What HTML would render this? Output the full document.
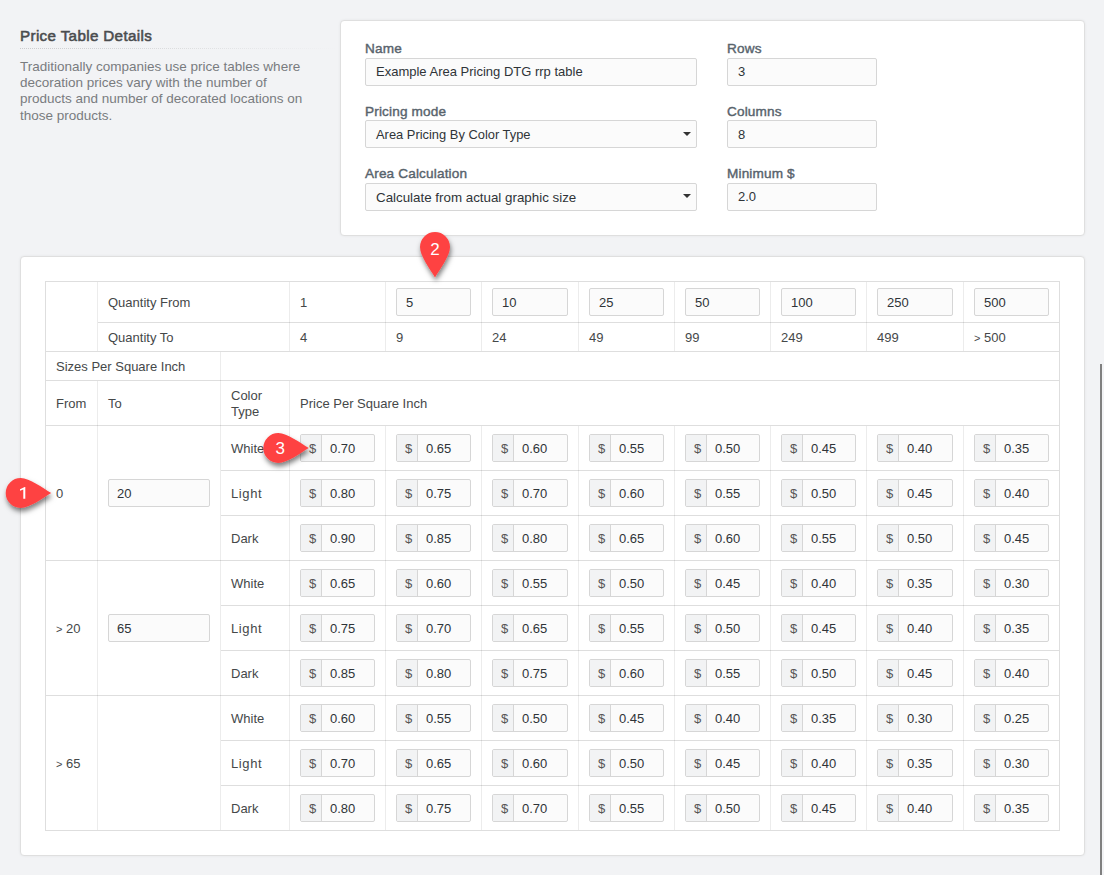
<!DOCTYPE html><html><head><meta charset="utf-8"><style>
*{margin:0;padding:0;box-sizing:border-box}
html,body{width:1104px;height:875px;overflow:hidden;background:#f2f3f5;font-family:"Liberation Sans",sans-serif;position:relative}
.a{position:absolute}
.panel{position:absolute;background:#fff;border:1px solid #dfdfdf;border-radius:4px;box-shadow:0 0 3px rgba(0,0,0,0.06)}
.t{position:absolute;white-space:nowrap;font-size:13px;color:#454849;line-height:16px}
.lbl{position:absolute;white-space:nowrap;font-size:13.6px;font-weight:normal;letter-spacing:0.15px;-webkit-text-stroke:0.4px #58636c;color:#58636c;line-height:16px}
.inp{position:absolute;background:#fbfbfb;border:1px solid #d6d6d6;border-radius:2px}
.inp span{position:absolute;white-space:nowrap;font-size:13px;color:#2f3438;line-height:16px}
.hl{position:absolute;height:1px;background:#dedede}
.vl{position:absolute;width:1px;background:#dedede}
.vi{position:absolute;width:1px;background:rgba(0,0,0,0.075)}
.hi{position:absolute;height:1px;background:rgba(0,0,0,0.13)}
.grp{position:absolute;background:#fbfbfb;border:1px solid #d6d6d6;border-radius:2px;overflow:hidden}
.grp .ad{position:absolute;left:0;top:0;bottom:0;width:21px;background:#f2f3f4;border-right:1px solid #d6d6d6}
.grp .ad span{position:absolute;left:8px;top:6px;font-size:13px;color:#555;line-height:16px}
.grp .v{position:absolute;left:29px;top:6px;font-size:13px;color:#2f3438;line-height:16px}
.caret{position:absolute;width:0;height:0;border-left:4px solid transparent;border-right:4px solid transparent;border-top:4px solid #333}
.sb{position:absolute;left:1100px;top:364px;width:2px;height:511px;background:#808080}
</style></head><body>
<div class="a" style="left:20px;top:27px;font-size:15.2px;font-weight:normal;letter-spacing:0.35px;-webkit-text-stroke:0.55px #4a4c4e;color:#4a4c4e;line-height:18px;white-space:nowrap">Price Table Details</div>
<div class="a" style="left:20px;top:48px;width:320px;height:1px;background:repeating-linear-gradient(90deg,rgba(0,0,0,0.16) 0 1px,transparent 1px 2px);-webkit-mask-image:linear-gradient(90deg,#000 0%,rgba(0,0,0,0.55) 50%,transparent 100%)"></div>
<div class="a" style="left:20px;top:59px;font-size:13.5px;color:#797c7f;line-height:16.2px;white-space:nowrap">Traditionally companies use price tables where<br>decoration prices vary with the number of<br>products and number of decorated locations on<br>those products.</div>
<div class="panel" style="left:340px;top:20px;width:745px;height:216px"></div>
<div class="lbl" style="left:365px;top:41px">Name</div>
<div class="inp" style="left:365px;top:58px;width:332px;height:28px"><span style="left:10px;top:5px;font-size:13px">Example Area Pricing DTG rrp table</span></div>
<div class="lbl" style="left:365px;top:104px">Pricing mode</div>
<div class="inp" style="left:365px;top:120px;width:332px;height:28px"><span style="left:10px;top:6px;font-size:12.9px">Area Pricing By Color Type</span><div class="caret" style="left:317px;top:11px"></div></div>
<div class="lbl" style="left:365px;top:166px">Area Calculation</div>
<div class="inp" style="left:365px;top:183px;width:332px;height:28px"><span style="left:10px;top:6px;font-size:13.35px">Calculate from actual graphic size</span><div class="caret" style="left:317px;top:10px"></div></div>
<div class="lbl" style="left:727px;top:41px">Rows</div>
<div class="inp" style="left:727px;top:58px;width:150px;height:28px"><span style="left:10px;top:5px;font-size:13px">3</span></div>
<div class="lbl" style="left:727px;top:104px">Columns</div>
<div class="inp" style="left:727px;top:120px;width:150px;height:28px"><span style="left:10px;top:6px;font-size:13px">8</span></div>
<div class="lbl" style="left:727px;top:166px">Minimum $</div>
<div class="inp" style="left:727px;top:183px;width:150px;height:28px"><span style="left:10px;top:5px;font-size:13px">2.0</span></div>
<div class="panel" style="left:20px;top:256px;width:1065px;height:600px"></div>
<div class="hl" style="left:45px;top:281px;width:1015px"></div>
<div class="hl" style="left:45px;top:830px;width:1015px"></div>
<div class="vl" style="left:45px;top:281px;height:550px"></div>
<div class="vl" style="left:1059px;top:281px;height:550px"></div>
<div class="hi" style="left:98px;top:322px;width:961px"></div>
<div class="hi" style="left:46px;top:351px;width:1013px"></div>
<div class="hi" style="left:46px;top:380px;width:1013px"></div>
<div class="hi" style="left:46px;top:425px;width:1013px"></div>
<div class="hi" style="left:221px;top:470px;width:838px"></div>
<div class="hi" style="left:221px;top:515px;width:838px"></div>
<div class="hi" style="left:221px;top:605px;width:838px"></div>
<div class="hi" style="left:221px;top:650px;width:838px"></div>
<div class="hi" style="left:221px;top:740px;width:838px"></div>
<div class="hi" style="left:221px;top:785px;width:838px"></div>
<div class="hi" style="left:46px;top:560px;width:1013px"></div>
<div class="hi" style="left:46px;top:695px;width:1013px"></div>
<div class="vi" style="left:97px;top:282px;height:69px"></div>
<div class="vi" style="left:97px;top:381px;height:449px"></div>
<div class="vi" style="left:220px;top:352px;height:478px"></div>
<div class="vi" style="left:289px;top:282px;height:69px"></div>
<div class="vi" style="left:289px;top:381px;height:449px"></div>
<div class="vi" style="left:385px;top:282px;height:69px"></div>
<div class="vi" style="left:385px;top:426px;height:404px"></div>
<div class="vi" style="left:481px;top:282px;height:69px"></div>
<div class="vi" style="left:481px;top:426px;height:404px"></div>
<div class="vi" style="left:578px;top:282px;height:69px"></div>
<div class="vi" style="left:578px;top:426px;height:404px"></div>
<div class="vi" style="left:674px;top:282px;height:69px"></div>
<div class="vi" style="left:674px;top:426px;height:404px"></div>
<div class="vi" style="left:770px;top:282px;height:69px"></div>
<div class="vi" style="left:770px;top:426px;height:404px"></div>
<div class="vi" style="left:866px;top:282px;height:69px"></div>
<div class="vi" style="left:866px;top:426px;height:404px"></div>
<div class="vi" style="left:963px;top:282px;height:69px"></div>
<div class="vi" style="left:963px;top:426px;height:404px"></div>
<div class="t" style="left:108px;top:295px;">Quantity From</div>
<div class="t" style="left:108px;top:330px;">Quantity To</div>
<div class="t" style="left:300px;top:295px;">1</div>
<div class="t" style="left:300px;top:330px;">4</div>
<div class="inp" style="left:396px;top:288px;width:75px;height:28px"><span style="left:9px;top:6px;font-size:13px">5</span></div>
<div class="t" style="left:396px;top:330px;">9</div>
<div class="inp" style="left:492px;top:288px;width:76px;height:28px"><span style="left:9px;top:6px;font-size:13px">10</span></div>
<div class="t" style="left:492px;top:330px;">24</div>
<div class="inp" style="left:589px;top:288px;width:75px;height:28px"><span style="left:9px;top:6px;font-size:13px">25</span></div>
<div class="t" style="left:589px;top:330px;">49</div>
<div class="inp" style="left:685px;top:288px;width:75px;height:28px"><span style="left:9px;top:6px;font-size:13px">50</span></div>
<div class="t" style="left:685px;top:330px;">99</div>
<div class="inp" style="left:781px;top:288px;width:75px;height:28px"><span style="left:9px;top:6px;font-size:13px">100</span></div>
<div class="t" style="left:781px;top:330px;">249</div>
<div class="inp" style="left:877px;top:288px;width:76px;height:28px"><span style="left:9px;top:6px;font-size:13px">250</span></div>
<div class="t" style="left:877px;top:330px;">499</div>
<div class="inp" style="left:974px;top:288px;width:75px;height:28px"><span style="left:9px;top:6px;font-size:13px">500</span></div>
<div class="t" style="left:974px;top:330px;"><span style="font-size:11px">&gt;</span> 500</div>
<div class="t" style="left:56px;top:359px;">Sizes Per Square Inch</div>
<div class="t" style="left:56px;top:396px;">From</div>
<div class="t" style="left:108px;top:396px;">To</div>
<div class="t" style="left:231px;top:388px;">Color<br>Type</div>
<div class="t" style="left:300px;top:396px;">Price Per Square Inch</div>
<div class="t" style="left:231px;top:441px;">White</div>
<div class="grp" style="left:300px;top:434px;width:75px;height:28px"><div class="ad"><span>$</span></div><div class="v">0.70</div></div>
<div class="grp" style="left:396px;top:434px;width:75px;height:28px"><div class="ad"><span>$</span></div><div class="v">0.65</div></div>
<div class="grp" style="left:492px;top:434px;width:76px;height:28px"><div class="ad"><span>$</span></div><div class="v">0.60</div></div>
<div class="grp" style="left:589px;top:434px;width:75px;height:28px"><div class="ad"><span>$</span></div><div class="v">0.55</div></div>
<div class="grp" style="left:685px;top:434px;width:75px;height:28px"><div class="ad"><span>$</span></div><div class="v">0.50</div></div>
<div class="grp" style="left:781px;top:434px;width:75px;height:28px"><div class="ad"><span>$</span></div><div class="v">0.45</div></div>
<div class="grp" style="left:877px;top:434px;width:76px;height:28px"><div class="ad"><span>$</span></div><div class="v">0.40</div></div>
<div class="grp" style="left:974px;top:434px;width:75px;height:28px"><div class="ad"><span>$</span></div><div class="v">0.35</div></div>
<div class="t" style="left:231px;top:486px;letter-spacing:0.6px">Light</div>
<div class="grp" style="left:300px;top:479px;width:75px;height:28px"><div class="ad"><span>$</span></div><div class="v">0.80</div></div>
<div class="grp" style="left:396px;top:479px;width:75px;height:28px"><div class="ad"><span>$</span></div><div class="v">0.75</div></div>
<div class="grp" style="left:492px;top:479px;width:76px;height:28px"><div class="ad"><span>$</span></div><div class="v">0.70</div></div>
<div class="grp" style="left:589px;top:479px;width:75px;height:28px"><div class="ad"><span>$</span></div><div class="v">0.60</div></div>
<div class="grp" style="left:685px;top:479px;width:75px;height:28px"><div class="ad"><span>$</span></div><div class="v">0.55</div></div>
<div class="grp" style="left:781px;top:479px;width:75px;height:28px"><div class="ad"><span>$</span></div><div class="v">0.50</div></div>
<div class="grp" style="left:877px;top:479px;width:76px;height:28px"><div class="ad"><span>$</span></div><div class="v">0.45</div></div>
<div class="grp" style="left:974px;top:479px;width:75px;height:28px"><div class="ad"><span>$</span></div><div class="v">0.40</div></div>
<div class="t" style="left:231px;top:531px;">Dark</div>
<div class="grp" style="left:300px;top:524px;width:75px;height:28px"><div class="ad"><span>$</span></div><div class="v">0.90</div></div>
<div class="grp" style="left:396px;top:524px;width:75px;height:28px"><div class="ad"><span>$</span></div><div class="v">0.85</div></div>
<div class="grp" style="left:492px;top:524px;width:76px;height:28px"><div class="ad"><span>$</span></div><div class="v">0.80</div></div>
<div class="grp" style="left:589px;top:524px;width:75px;height:28px"><div class="ad"><span>$</span></div><div class="v">0.65</div></div>
<div class="grp" style="left:685px;top:524px;width:75px;height:28px"><div class="ad"><span>$</span></div><div class="v">0.60</div></div>
<div class="grp" style="left:781px;top:524px;width:75px;height:28px"><div class="ad"><span>$</span></div><div class="v">0.55</div></div>
<div class="grp" style="left:877px;top:524px;width:76px;height:28px"><div class="ad"><span>$</span></div><div class="v">0.50</div></div>
<div class="grp" style="left:974px;top:524px;width:75px;height:28px"><div class="ad"><span>$</span></div><div class="v">0.45</div></div>
<div class="t" style="left:231px;top:576px;">White</div>
<div class="grp" style="left:300px;top:569px;width:75px;height:28px"><div class="ad"><span>$</span></div><div class="v">0.65</div></div>
<div class="grp" style="left:396px;top:569px;width:75px;height:28px"><div class="ad"><span>$</span></div><div class="v">0.60</div></div>
<div class="grp" style="left:492px;top:569px;width:76px;height:28px"><div class="ad"><span>$</span></div><div class="v">0.55</div></div>
<div class="grp" style="left:589px;top:569px;width:75px;height:28px"><div class="ad"><span>$</span></div><div class="v">0.50</div></div>
<div class="grp" style="left:685px;top:569px;width:75px;height:28px"><div class="ad"><span>$</span></div><div class="v">0.45</div></div>
<div class="grp" style="left:781px;top:569px;width:75px;height:28px"><div class="ad"><span>$</span></div><div class="v">0.40</div></div>
<div class="grp" style="left:877px;top:569px;width:76px;height:28px"><div class="ad"><span>$</span></div><div class="v">0.35</div></div>
<div class="grp" style="left:974px;top:569px;width:75px;height:28px"><div class="ad"><span>$</span></div><div class="v">0.30</div></div>
<div class="t" style="left:231px;top:621px;letter-spacing:0.6px">Light</div>
<div class="grp" style="left:300px;top:614px;width:75px;height:28px"><div class="ad"><span>$</span></div><div class="v">0.75</div></div>
<div class="grp" style="left:396px;top:614px;width:75px;height:28px"><div class="ad"><span>$</span></div><div class="v">0.70</div></div>
<div class="grp" style="left:492px;top:614px;width:76px;height:28px"><div class="ad"><span>$</span></div><div class="v">0.65</div></div>
<div class="grp" style="left:589px;top:614px;width:75px;height:28px"><div class="ad"><span>$</span></div><div class="v">0.55</div></div>
<div class="grp" style="left:685px;top:614px;width:75px;height:28px"><div class="ad"><span>$</span></div><div class="v">0.50</div></div>
<div class="grp" style="left:781px;top:614px;width:75px;height:28px"><div class="ad"><span>$</span></div><div class="v">0.45</div></div>
<div class="grp" style="left:877px;top:614px;width:76px;height:28px"><div class="ad"><span>$</span></div><div class="v">0.40</div></div>
<div class="grp" style="left:974px;top:614px;width:75px;height:28px"><div class="ad"><span>$</span></div><div class="v">0.35</div></div>
<div class="t" style="left:231px;top:666px;">Dark</div>
<div class="grp" style="left:300px;top:659px;width:75px;height:28px"><div class="ad"><span>$</span></div><div class="v">0.85</div></div>
<div class="grp" style="left:396px;top:659px;width:75px;height:28px"><div class="ad"><span>$</span></div><div class="v">0.80</div></div>
<div class="grp" style="left:492px;top:659px;width:76px;height:28px"><div class="ad"><span>$</span></div><div class="v">0.75</div></div>
<div class="grp" style="left:589px;top:659px;width:75px;height:28px"><div class="ad"><span>$</span></div><div class="v">0.60</div></div>
<div class="grp" style="left:685px;top:659px;width:75px;height:28px"><div class="ad"><span>$</span></div><div class="v">0.55</div></div>
<div class="grp" style="left:781px;top:659px;width:75px;height:28px"><div class="ad"><span>$</span></div><div class="v">0.50</div></div>
<div class="grp" style="left:877px;top:659px;width:76px;height:28px"><div class="ad"><span>$</span></div><div class="v">0.45</div></div>
<div class="grp" style="left:974px;top:659px;width:75px;height:28px"><div class="ad"><span>$</span></div><div class="v">0.40</div></div>
<div class="t" style="left:231px;top:711px;">White</div>
<div class="grp" style="left:300px;top:704px;width:75px;height:28px"><div class="ad"><span>$</span></div><div class="v">0.60</div></div>
<div class="grp" style="left:396px;top:704px;width:75px;height:28px"><div class="ad"><span>$</span></div><div class="v">0.55</div></div>
<div class="grp" style="left:492px;top:704px;width:76px;height:28px"><div class="ad"><span>$</span></div><div class="v">0.50</div></div>
<div class="grp" style="left:589px;top:704px;width:75px;height:28px"><div class="ad"><span>$</span></div><div class="v">0.45</div></div>
<div class="grp" style="left:685px;top:704px;width:75px;height:28px"><div class="ad"><span>$</span></div><div class="v">0.40</div></div>
<div class="grp" style="left:781px;top:704px;width:75px;height:28px"><div class="ad"><span>$</span></div><div class="v">0.35</div></div>
<div class="grp" style="left:877px;top:704px;width:76px;height:28px"><div class="ad"><span>$</span></div><div class="v">0.30</div></div>
<div class="grp" style="left:974px;top:704px;width:75px;height:28px"><div class="ad"><span>$</span></div><div class="v">0.25</div></div>
<div class="t" style="left:231px;top:756px;letter-spacing:0.6px">Light</div>
<div class="grp" style="left:300px;top:749px;width:75px;height:28px"><div class="ad"><span>$</span></div><div class="v">0.70</div></div>
<div class="grp" style="left:396px;top:749px;width:75px;height:28px"><div class="ad"><span>$</span></div><div class="v">0.65</div></div>
<div class="grp" style="left:492px;top:749px;width:76px;height:28px"><div class="ad"><span>$</span></div><div class="v">0.60</div></div>
<div class="grp" style="left:589px;top:749px;width:75px;height:28px"><div class="ad"><span>$</span></div><div class="v">0.50</div></div>
<div class="grp" style="left:685px;top:749px;width:75px;height:28px"><div class="ad"><span>$</span></div><div class="v">0.45</div></div>
<div class="grp" style="left:781px;top:749px;width:75px;height:28px"><div class="ad"><span>$</span></div><div class="v">0.40</div></div>
<div class="grp" style="left:877px;top:749px;width:76px;height:28px"><div class="ad"><span>$</span></div><div class="v">0.35</div></div>
<div class="grp" style="left:974px;top:749px;width:75px;height:28px"><div class="ad"><span>$</span></div><div class="v">0.30</div></div>
<div class="t" style="left:231px;top:801px;">Dark</div>
<div class="grp" style="left:300px;top:794px;width:75px;height:28px"><div class="ad"><span>$</span></div><div class="v">0.80</div></div>
<div class="grp" style="left:396px;top:794px;width:75px;height:28px"><div class="ad"><span>$</span></div><div class="v">0.75</div></div>
<div class="grp" style="left:492px;top:794px;width:76px;height:28px"><div class="ad"><span>$</span></div><div class="v">0.70</div></div>
<div class="grp" style="left:589px;top:794px;width:75px;height:28px"><div class="ad"><span>$</span></div><div class="v">0.55</div></div>
<div class="grp" style="left:685px;top:794px;width:75px;height:28px"><div class="ad"><span>$</span></div><div class="v">0.50</div></div>
<div class="grp" style="left:781px;top:794px;width:75px;height:28px"><div class="ad"><span>$</span></div><div class="v">0.45</div></div>
<div class="grp" style="left:877px;top:794px;width:76px;height:28px"><div class="ad"><span>$</span></div><div class="v">0.40</div></div>
<div class="grp" style="left:974px;top:794px;width:75px;height:28px"><div class="ad"><span>$</span></div><div class="v">0.35</div></div>
<div class="t" style="left:56px;top:486px;">0</div>
<div class="inp" style="left:108px;top:479px;width:102px;height:28px"><span style="left:8px;top:6px;font-size:13px">20</span></div>
<div class="t" style="left:56px;top:621px;"><span style="font-size:11px">&gt;</span> 20</div>
<div class="inp" style="left:108px;top:614px;width:102px;height:28px"><span style="left:8px;top:6px;font-size:13px">65</span></div>
<div class="t" style="left:56px;top:756px;"><span style="font-size:11px">&gt;</span> 65</div>
<div class="sb"></div>
<svg class="a" style="left:0;top:0" width="1104" height="875" viewBox="0 0 1104 875"><defs><filter id="sh" x="-50%" y="-50%" width="200%" height="200%"><feDropShadow dx="1" dy="3.5" stdDeviation="2.6" flood-color="#000" flood-opacity="0.5"/></filter></defs><path d="M420.00,247.00 A15,15 0 0 1 450.00,247.00 C450.00,256.00 440.00,269.00 435.00,277.50 C430.00,269.00 420.00,256.00 420.00,247.00 Z" fill="#fe4343" filter="url(#sh)"/><text x="435" y="255" text-anchor="middle" style="font-family:&quot;Liberation Sans&quot;,sans-serif;font-size:17px" fill="#fff">2</text><path d="M20.70,478.00 A15,15 0 0 0 20.70,508.00 C29.70,508.00 42.70,498.00 51.20,493.00 C42.70,488.00 29.70,478.00 20.70,478.00 Z" fill="#fe4343" filter="url(#sh)"/><path d="M25.3,486.9 L25.3,498.8 L23.3,498.8 L23.3,489.4 L20.0,490.8 L20.0,489.3 L24.7,486.9 Z" fill="#fff"/><path d="M278.30,433.00 A15,15 0 0 0 278.30,463.00 C287.30,463.00 300.30,453.00 308.80,448.00 C300.30,443.00 287.30,433.00 278.30,433.00 Z" fill="#fe4343" filter="url(#sh)"/><text x="280.3" y="454" text-anchor="middle" style="font-family:&quot;Liberation Sans&quot;,sans-serif;font-size:17px" fill="#fff">3</text></svg>
</body></html>
